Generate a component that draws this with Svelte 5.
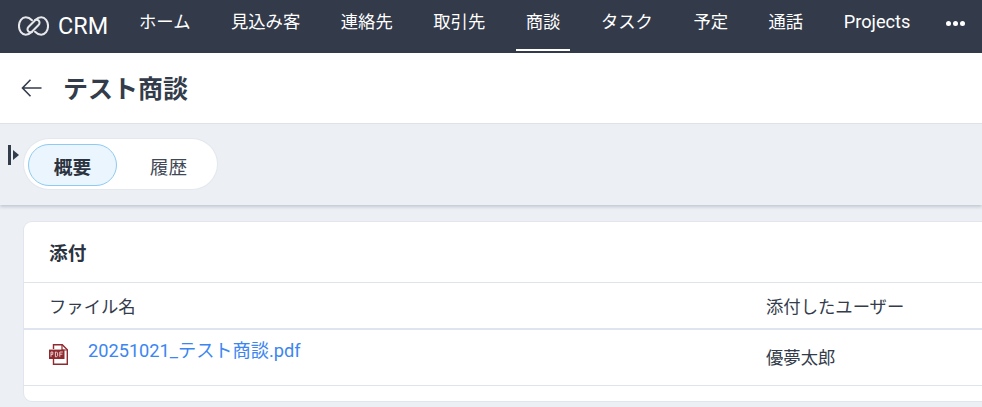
<script>
  const items = ['ホーム','見込み客','連絡先','取引先','商談','タスク','予定','通話','Projects'];
</script>

<div class="page">
  <nav class="nav">
    <div class="brand">
      <svg class="logo" width="31" height="20" viewBox="0 0 32 20" fill="none" stroke="#e6e8eb" stroke-width="2.1" stroke-linecap="round">
        <path d="M14.4 4C12.7 2.2 10.5 1 8 1 4 1 1 5 1 10s3 9 7 9c2.6 0 4.4-1.2 6-2.8l7-7c1.6-1.6 1.6-3.6.2-4.9-1.1-1-2.4-1-3.4-.6"/>
        <path d="M17.6 16C19.3 17.8 21.5 19 24 19c4 0 7-4 7-9s-3-9-7-9c-2.6 0-4.4 1.2-6 2.8l-7 7c-1.6 1.6-1.6 3.6-.2 4.9 1.1 1 2.4 1 3.4.6"/>
      </svg>
      <span class="crm">CRM</span>
    </div>
    <ul class="menu">
      {#each items as it}
        <li class:active={it === '商談'} class:latin={it === 'Projects'}>{it}</li>
      {/each}
    </ul>
    <div class="more"><i></i><i></i><i></i></div>
  </nav>

  <header class="head">
    <svg width="24" height="20" viewBox="0 0 24 20" fill="none" stroke="#333c4b" stroke-width="1.6">
      <path d="M21.5 10H2.5M10.5 1.8 2.5 10l8 8.2"/>
    </svg>
    <h1>テスト商談</h1>
  </header>

  <section class="tabbar">
    <div class="toggle"><b></b><span></span></div>
    <div class="tabs">
      <div class="tab on">概要</div>
      <div class="tab">履歴</div>
    </div>
  </section>

  <main class="body">
    <div class="card">
      <h2>添付</h2>
      <div class="row th">
        <div class="c1">ファイル名</div>
        <div>添付したユーザー</div>
      </div>
      <div class="row td">
        <div class="c1 file">
          <svg class="pdf" width="21" height="21" viewBox="0 0 21 21" fill="none">
            <path d="M4.5 5V.8h8.8l5 5v14.4H4.5V15" stroke="#8f2a2e" stroke-width="1.4" fill="#fff"/>
            <path d="M13 .8V6h5.3" stroke="#8f2a2e" stroke-width="1.2"/>
            <rect x="0" y="5.6" width="15.5" height="9.4" fill="#8f2a2e"/>
            <path d="M2 12.8V8h1.8v2.4H2M6.4 8v4.8h1.2l1-1V9l-1-1ZM10.8 12.8V8h3M10.8 10.2h2.6" stroke="#ecdcdc" stroke-width=".9"/>
          </svg>
          <a href="#top">20251021_テスト商談.pdf</a>
        </div>
        <div class="user">優夢太郎</div>
      </div>
    </div>
  </main>
</div>

<style>
  :global(body) { margin: 0; background: #eceff4; }
  .page {
    width: 982px; height: 407px; overflow: hidden; background: #eceff4;
    font-family: Roboto, "Noto Sans CJK JP", sans-serif; color: #333c4b;
  }
  .nav {
    height: 53px; background: #333a4a; color: #fff; display: flex; align-items: center;
    padding-left: 18px; box-sizing: border-box;
  }
  .brand { display: flex; align-items: center; gap: 9px; width: 111px; flex: none; }
  .logo { display: block; margin-top: -1px; }
  .crm { font-size: 23.4px; line-height: 1; }
  .menu {
    display: flex; list-style: none; margin: 0; padding: 0; gap: 20.5px; height: 100%; flex: none;
  }
  .menu li {
    font-size: 17.33px; padding: 0 10px; line-height: 44px; height: 53px; box-sizing: border-box;
    white-space: nowrap; position: relative;
  }
  .menu li.latin { font-size: 18.2px; }
  .menu li.active::after {
    content: ""; position: absolute; left: 0; right: 0; bottom: 2px; height: 2px; background: #fff;
  }
  .more { display: flex; gap: 2px; margin-left: 26px; padding-bottom: 7px; }
  .more i { width: 5px; height: 5px; background: #fff; border-radius: 50%; }
  .head {
    height: 70px; background: #fff; border-bottom: 1px solid #dfe3ea; display: flex; align-items: center;
    padding-left: 20px; gap: 20px;
  }
  h1 { font-size: 25px; font-weight: 700; margin: -2px 0 0 -1px; }
  .tabbar {
    height: 81px; padding: 15px 0 0 24px; box-sizing: border-box; position: relative;
    box-shadow: 0 2px 3px rgba(90,105,130,.28);
  }
  .toggle { position: absolute; left: 8px; top: 21px; display: flex; align-items: center; gap: 2.5px; height: 20px; }
  .toggle b { width: 2.5px; height: 20px; background: #333c4b; }
  .toggle span { width: 0; height: 0; border-left: 6px solid #333c4b; border-top: 5px solid transparent; border-bottom: 5px solid transparent; }
  .tabs {
    width: 193px; height: 50px; background: #fff; border-radius: 25px; box-sizing: border-box;
    display: flex; padding: 5px 4px; box-shadow: 0 0 0 1px #e3e7ee;
  }
  .tab {
    width: 89px; flex: none; height: 42px; border-radius: 21px; display: flex; align-items: center; justify-content: center;
    font-size: 18.67px; box-sizing: border-box;
  }
  .tab + .tab { color: #414957; margin-left: 7px; }
  .tab.on { background: #ebf5fd; border: 1px solid #8ecbf3; font-weight: 700; color: #2b3340; }
  .body { padding: 17px 0 0 24px; }
  .card {
    width: 1100px; height: 179px; background: #fff; border-radius: 8px; box-sizing: border-box;
    box-shadow: 0 0 0 1px #e2e6ec;
  }
  h2 { font-size: 18.67px; font-weight: 700; margin: 0; height: 60px; line-height: 64px; padding-left: 25px; border-bottom: 1px solid #dfe3ea; color: #2b3340; box-sizing: content-box; }
  .row { display: flex; padding-left: 25px; font-size: 17.33px; }
  .c1 { width: 717px; flex: none; }
  .th { height: 47px; line-height: 48px; border-bottom: 2px solid #dfe5ee; box-sizing: border-box; }
  .td { height: 56px; border-bottom: 1px solid #dfe3ea; box-sizing: border-box; }
  .file { display: flex; gap: 18px; align-items: flex-start; padding-top: 10px; box-sizing: border-box; }
  .pdf { margin-top: 4px; flex: none; }
  a { color: #3b86f0; text-decoration: none; line-height: 22px; font-size: 18.2px; }
  .user { padding-top: 16px; line-height: 24px; }
</style>
